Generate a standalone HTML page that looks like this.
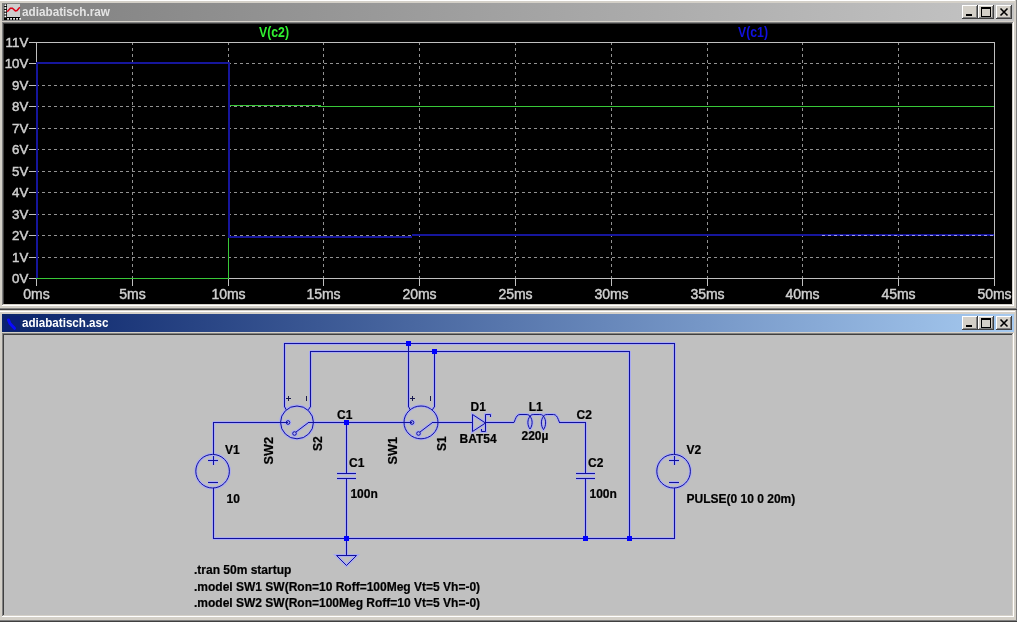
<!DOCTYPE html><html><head><meta charset="utf-8"><title>LTspice</title><style>
html,body{margin:0;padding:0;background:#d4d0c8;}body{width:1017px;height:622px;overflow:hidden;position:relative;}
svg{position:absolute;left:0;top:0;display:block;will-change:transform;transform:translateZ(0)}
text{font-family:"Liberation Sans",sans-serif;}
.ax{font-size:14px;fill:#cfcfcf;stroke:#cfcfcf;stroke-width:0.45px;}
.sch{font-size:12px;font-weight:bold;fill:#000;stroke:#000;stroke-width:0.2px;}
.w{shape-rendering:crispEdges}
.s{}
.g{stroke:#929292;stroke-width:1;stroke-dasharray:3 3;shape-rendering:crispEdges}
.f{stroke:#c0c0c0;stroke-width:1;shape-rendering:crispEdges}
</style></head><body>
<svg width="1017" height="622" viewBox="0 0 1017 622">
<defs>
<linearGradient id="gi" x1="0" x2="1" y1="0" y2="0"><stop offset="0" stop-color="#808080"/><stop offset="1" stop-color="#c4c4c4"/></linearGradient>
<linearGradient id="ga" x1="0" x2="1" y1="0" y2="0"><stop offset="0" stop-color="#0a246a"/><stop offset="1" stop-color="#a6caf0"/></linearGradient>
</defs>
<rect x="0" y="-1" width="1017" height="311" fill="#d4d0c8" />
<rect x="0" y="0" width="1015" height="1" fill="#ffffff" />
<rect x="1016" y="-1" width="1" height="311" fill="#808080" />
<rect x="0" y="309" width="1017" height="1" fill="#404040" />
<rect x="0" y="308" width="1017" height="1" fill="#808080" />
<rect x="2" y="3" width="1012" height="18" fill="url(#gi)" />
<text x="22" y="16" font-size="12" font-weight="bold" fill="#e4e4e4" textLength="88" lengthAdjust="spacingAndGlyphs">adiabatisch.raw</text>
<rect x="962" y="5" width="16" height="14" fill="#d4d0c8" />
<rect x="962" y="5" width="15" height="1" fill="#ffffff" />
<rect x="962" y="5" width="1" height="13" fill="#ffffff" />
<rect x="977" y="5" width="1" height="14" fill="#404040" />
<rect x="962" y="18" width="16" height="1" fill="#404040" />
<rect x="976" y="6" width="1" height="12" fill="#808080" />
<rect x="963" y="17" width="14" height="1" fill="#808080" />
<rect x="966" y="14" width="6" height="2" fill="#000" />
<rect x="978" y="5" width="16" height="14" fill="#d4d0c8" />
<rect x="978" y="5" width="15" height="1" fill="#ffffff" />
<rect x="978" y="5" width="1" height="13" fill="#ffffff" />
<rect x="993" y="5" width="1" height="14" fill="#404040" />
<rect x="978" y="18" width="16" height="1" fill="#404040" />
<rect x="992" y="6" width="1" height="12" fill="#808080" />
<rect x="979" y="17" width="14" height="1" fill="#808080" />
<rect x="981" y="7" width="9" height="9" fill="none" stroke="#000" stroke-width="1" transform="translate(.5,.5)"/>
<rect x="981" y="7" width="10" height="2" fill="#000" />
<rect x="996" y="5" width="16" height="14" fill="#d4d0c8" />
<rect x="996" y="5" width="15" height="1" fill="#ffffff" />
<rect x="996" y="5" width="1" height="13" fill="#ffffff" />
<rect x="1011" y="5" width="1" height="14" fill="#404040" />
<rect x="996" y="18" width="16" height="1" fill="#404040" />
<rect x="1010" y="6" width="1" height="12" fill="#808080" />
<rect x="997" y="17" width="14" height="1" fill="#808080" />
<path d="M1000.5 8.5L1007.5 15.5M1007.5 8.5L1000.5 15.5" stroke="#000" stroke-width="1.6" fill="none"/>
<rect x="2" y="22" width="1012" height="1" fill="#808080" />
<rect x="2" y="22" width="1" height="283" fill="#808080" />
<rect x="3" y="23" width="1009" height="1" fill="#404040" />
<rect x="3" y="23" width="1" height="281" fill="#404040" />
<rect x="2" y="305" width="1012" height="1" fill="#ffffff" />
<rect x="1013" y="22" width="1" height="284" fill="#ffffff" />
<rect x="3" y="304" width="1010" height="1" fill="#d4d0c8" />
<rect x="1012" y="23" width="1" height="282" fill="#d4d0c8" />
<rect x="4" y="24" width="1008" height="280" fill="#000000" />
<rect x="0" y="310" width="1017" height="312" fill="#d4d0c8" />
<rect x="0" y="311" width="1015" height="1" fill="#ffffff" />
<rect x="1016" y="310" width="1" height="312" fill="#808080" />
<rect x="0" y="621" width="1017" height="1" fill="#404040" />
<rect x="0" y="620" width="1017" height="1" fill="#808080" />
<rect x="2" y="314" width="1012" height="18" fill="url(#ga)" />
<text x="22" y="327" font-size="12" font-weight="bold" fill="#ffffff" textLength="86.5" lengthAdjust="spacingAndGlyphs">adiabatisch.asc</text>
<rect x="962" y="316" width="16" height="14" fill="#d4d0c8" />
<rect x="962" y="316" width="15" height="1" fill="#ffffff" />
<rect x="962" y="316" width="1" height="13" fill="#ffffff" />
<rect x="977" y="316" width="1" height="14" fill="#404040" />
<rect x="962" y="329" width="16" height="1" fill="#404040" />
<rect x="976" y="317" width="1" height="12" fill="#808080" />
<rect x="963" y="328" width="14" height="1" fill="#808080" />
<rect x="966" y="325" width="6" height="2" fill="#000" />
<rect x="978" y="316" width="16" height="14" fill="#d4d0c8" />
<rect x="978" y="316" width="15" height="1" fill="#ffffff" />
<rect x="978" y="316" width="1" height="13" fill="#ffffff" />
<rect x="993" y="316" width="1" height="14" fill="#404040" />
<rect x="978" y="329" width="16" height="1" fill="#404040" />
<rect x="992" y="317" width="1" height="12" fill="#808080" />
<rect x="979" y="328" width="14" height="1" fill="#808080" />
<rect x="981" y="318" width="9" height="9" fill="none" stroke="#000" stroke-width="1" transform="translate(.5,.5)"/>
<rect x="981" y="318" width="10" height="2" fill="#000" />
<rect x="996" y="316" width="16" height="14" fill="#d4d0c8" />
<rect x="996" y="316" width="15" height="1" fill="#ffffff" />
<rect x="996" y="316" width="1" height="13" fill="#ffffff" />
<rect x="1011" y="316" width="1" height="14" fill="#404040" />
<rect x="996" y="329" width="16" height="1" fill="#404040" />
<rect x="1010" y="317" width="1" height="12" fill="#808080" />
<rect x="997" y="328" width="14" height="1" fill="#808080" />
<path d="M1000.5 319.5L1007.5 326.5M1007.5 319.5L1000.5 326.5" stroke="#000" stroke-width="1.6" fill="none"/>
<rect x="2" y="333" width="1012" height="1" fill="#808080" />
<rect x="2" y="333" width="1" height="283" fill="#808080" />
<rect x="3" y="334" width="1009" height="1" fill="#404040" />
<rect x="3" y="334" width="1" height="281" fill="#404040" />
<rect x="2" y="616" width="1012" height="1" fill="#ffffff" />
<rect x="1013" y="333" width="1" height="284" fill="#ffffff" />
<rect x="3" y="615" width="1010" height="1" fill="#d4d0c8" />
<rect x="1012" y="334" width="1" height="282" fill="#d4d0c8" />
<rect x="4" y="335" width="1008" height="280" fill="#c0c0c0" />
<rect x="4" y="4" width="16" height="16" fill="#cecece" />
<rect x="4" y="4" width="3" height="16" fill="#000" />
<rect x="4" y="17" width="16" height="3" fill="#000" />
<rect x="4.4" y="4.3" width="1.9" height="1.8" fill="#fff" />
<rect x="4.4" y="7.1" width="1.9" height="1.8" fill="#fff" />
<rect x="4.4" y="9.899999999999999" width="1.9" height="1.8" fill="#fff" />
<rect x="4.4" y="12.7" width="1.9" height="1.8" fill="#fff" />
<rect x="4.4" y="15.5" width="1.9" height="1.8" fill="#fff" />
<rect x="7.2" y="18" width="1.7" height="1.7" fill="#fff" />
<rect x="10.2" y="18" width="1.7" height="1.7" fill="#fff" />
<rect x="13.2" y="18" width="1.7" height="1.7" fill="#fff" />
<rect x="16.2" y="18" width="1.7" height="1.7" fill="#fff" />
<rect x="19.2" y="18" width="1.7" height="1.7" fill="#fff" />
<path d="M7.2 11.8L10.4 8.3L12.4 8.3L15.4 10.9L17 10.6L19.8 7.3" stroke="#dc0018" stroke-width="1.5" fill="none"/>
<rect x="4" y="316" width="16" height="15" fill="#0a1f74" />
<path d="M8.5 320L10 323.5L14.5 328.3" stroke="#0a0aff" stroke-width="3" fill="none" stroke-linecap="round" stroke-linejoin="round"/>
<line x1="132.5" y1="42" x2="132.5" y2="278" class="g" />
<line x1="228.5" y1="42" x2="228.5" y2="278" class="g" />
<line x1="323.5" y1="42" x2="323.5" y2="278" class="g" />
<line x1="419.5" y1="42" x2="419.5" y2="278" class="g" />
<line x1="515.5" y1="42" x2="515.5" y2="278" class="g" />
<line x1="611.5" y1="42" x2="611.5" y2="278" class="g" />
<line x1="707.5" y1="42" x2="707.5" y2="278" class="g" />
<line x1="802.5" y1="42" x2="802.5" y2="278" class="g" />
<line x1="898.5" y1="42" x2="898.5" y2="278" class="g" />
<line x1="36" y1="257.5" x2="994" y2="257.5" class="g" />
<line x1="36" y1="235.5" x2="994" y2="235.5" class="g" />
<line x1="36" y1="214.5" x2="994" y2="214.5" class="g" />
<line x1="36" y1="192.5" x2="994" y2="192.5" class="g" />
<line x1="36" y1="171.5" x2="994" y2="171.5" class="g" />
<line x1="36" y1="149.5" x2="994" y2="149.5" class="g" />
<line x1="36" y1="128.5" x2="994" y2="128.5" class="g" />
<line x1="36" y1="106.5" x2="994" y2="106.5" class="g" />
<line x1="36" y1="85.5" x2="994" y2="85.5" class="g" />
<line x1="36" y1="63.5" x2="994" y2="63.5" class="g" />
<line x1="29" y1="42.5" x2="995" y2="42.5" class="f" />
<line x1="29" y1="278.5" x2="995" y2="278.5" class="f" />
<line x1="36.5" y1="42" x2="36.5" y2="286" class="f" />
<line x1="994.5" y1="42" x2="994.5" y2="286" class="f" />
<line x1="132.5" y1="278" x2="132.5" y2="286" class="f" />
<line x1="228.5" y1="278" x2="228.5" y2="286" class="f" />
<line x1="323.5" y1="278" x2="323.5" y2="286" class="f" />
<line x1="419.5" y1="278" x2="419.5" y2="286" class="f" />
<line x1="515.5" y1="278" x2="515.5" y2="286" class="f" />
<line x1="611.5" y1="278" x2="611.5" y2="286" class="f" />
<line x1="707.5" y1="278" x2="707.5" y2="286" class="f" />
<line x1="802.5" y1="278" x2="802.5" y2="286" class="f" />
<line x1="898.5" y1="278" x2="898.5" y2="286" class="f" />
<line x1="29" y1="257.5" x2="36" y2="257.5" class="f" />
<line x1="29" y1="235.5" x2="36" y2="235.5" class="f" />
<line x1="29" y1="214.5" x2="36" y2="214.5" class="f" />
<line x1="29" y1="192.5" x2="36" y2="192.5" class="f" />
<line x1="29" y1="171.5" x2="36" y2="171.5" class="f" />
<line x1="29" y1="149.5" x2="36" y2="149.5" class="f" />
<line x1="29" y1="128.5" x2="36" y2="128.5" class="f" />
<line x1="29" y1="106.5" x2="36" y2="106.5" class="f" />
<line x1="29" y1="85.5" x2="36" y2="85.5" class="f" />
<line x1="29" y1="63.5" x2="36" y2="63.5" class="f" />
<text class="ax" x="28.3" y="282.8" text-anchor="end" style="font-size:13.3px">0V</text>
<text class="ax" x="28.3" y="261.8" text-anchor="end" style="font-size:13.3px">1V</text>
<text class="ax" x="28.3" y="239.8" text-anchor="end" style="font-size:13.3px">2V</text>
<text class="ax" x="28.3" y="218.8" text-anchor="end" style="font-size:13.3px">3V</text>
<text class="ax" x="28.3" y="196.8" text-anchor="end" style="font-size:13.3px">4V</text>
<text class="ax" x="28.3" y="175.8" text-anchor="end" style="font-size:13.3px">5V</text>
<text class="ax" x="28.3" y="153.8" text-anchor="end" style="font-size:13.3px">6V</text>
<text class="ax" x="28.3" y="132.8" text-anchor="end" style="font-size:13.3px">7V</text>
<text class="ax" x="28.3" y="110.8" text-anchor="end" style="font-size:13.3px">8V</text>
<text class="ax" x="28.3" y="89.8" text-anchor="end" style="font-size:13.3px">9V</text>
<text class="ax" x="28.3" y="67.8" text-anchor="end" style="font-size:13.3px">10V</text>
<text class="ax" x="28.3" y="46.8" text-anchor="end" style="font-size:13.3px">11V</text>
<text class="ax" x="36.5" y="299" text-anchor="middle">0ms</text>
<text class="ax" x="132.5" y="299" text-anchor="middle">5ms</text>
<text class="ax" x="228.5" y="299" text-anchor="middle">10ms</text>
<text class="ax" x="323.5" y="299" text-anchor="middle">15ms</text>
<text class="ax" x="419.5" y="299" text-anchor="middle">20ms</text>
<text class="ax" x="515.5" y="299" text-anchor="middle">25ms</text>
<text class="ax" x="611.5" y="299" text-anchor="middle">30ms</text>
<text class="ax" x="707.5" y="299" text-anchor="middle">35ms</text>
<text class="ax" x="802.5" y="299" text-anchor="middle">40ms</text>
<text class="ax" x="898.5" y="299" text-anchor="middle">45ms</text>
<text class="ax" x="994.5" y="299" text-anchor="middle">50ms</text>
<text x="274" y="37" font-size="14" font-weight="bold" fill="#30f030" text-anchor="middle" textLength="30" lengthAdjust="spacingAndGlyphs">V(c2)</text>
<text x="753" y="37" font-size="14" font-weight="bold" fill="#1010e0" text-anchor="middle" textLength="30" lengthAdjust="spacingAndGlyphs">V(c1)</text>
<path d="M36 278.5H228.5V105.5H320V106.5H994" stroke="#38c838" stroke-width="1" fill="none" shape-rendering="crispEdges"/>
<rect x="36" y="62" width="2" height="216" fill="#16169c" />
<rect x="36" y="62" width="194" height="2" fill="#16169c" />
<rect x="228" y="62" width="2" height="176" fill="#16169c" />
<rect x="228" y="236" width="184" height="2" fill="#16169c" />
<rect x="412" y="234" width="582" height="2" fill="#16169c" />
<line x1="822" y1="235.5" x2="994" y2="235.5" stroke="#9a9af0" stroke-width="1" stroke-dasharray="3 3" shape-rendering="crispEdges"/>
<defs><g id="sch" fill="none">
<line x1="284" y1="343.5" x2="675" y2="343.5" class="w" />
<line x1="284.5" y1="343" x2="284.5" y2="407" class="w" />
<line x1="674.5" y1="343" x2="674.5" y2="454" class="w" />
<line x1="310" y1="351.5" x2="630" y2="351.5" class="w" />
<line x1="310.5" y1="351" x2="310.5" y2="407" class="w" />
<line x1="629.5" y1="351" x2="629.5" y2="539" class="w" />
<line x1="408.5" y1="343" x2="408.5" y2="407" class="w" />
<line x1="434.5" y1="351" x2="434.5" y2="407" class="w" />
<line x1="213" y1="422.5" x2="288" y2="422.5" class="w" />
<line x1="213.5" y1="422" x2="213.5" y2="454" class="w" />
<line x1="213.5" y1="488" x2="213.5" y2="539" class="w" />
<line x1="213" y1="538.5" x2="675" y2="538.5" class="w" />
<line x1="674.5" y1="488" x2="674.5" y2="539" class="w" />
<line x1="308" y1="422.5" x2="412" y2="422.5" class="w" />
<line x1="432" y1="422.5" x2="473" y2="422.5" class="w" />
<line x1="485" y1="422.5" x2="514" y2="422.5" class="w" />
<line x1="559" y1="422.5" x2="586" y2="422.5" class="w" />
<line x1="346.5" y1="422" x2="346.5" y2="473" class="w" />
<line x1="346.5" y1="478" x2="346.5" y2="556" class="w" />
<line x1="585.5" y1="422" x2="585.5" y2="473" class="w" />
<line x1="585.5" y1="478" x2="585.5" y2="539" class="w" />
<ellipse cx="297" cy="422.4" rx="16.45" ry="16.4" class="s"/>
<path d="M284.5 406.5L286.2 409.8M310.5 406.5L308.4 409.8" class="s"/>
<circle cx="288" cy="422.5" r="1.8" class="s"/>
<circle cx="294.5" cy="433.5" r="1.8" class="s"/>
<path d="M296 432L308.5 422.5" class="s"/>
<ellipse cx="421" cy="422.4" rx="17" ry="16.4" class="s"/>
<path d="M408.5 406.5L410.2 409.8M434.5 406.5L432.4 409.8" class="s"/>
<circle cx="412" cy="422.5" r="1.8" class="s"/>
<circle cx="418.5" cy="433.5" r="1.8" class="s"/>
<path d="M420 432L432.5 422.5" class="s"/>
<circle cx="212.6" cy="471.2" r="16.8" class="s"/>
<path d="M208 460.5h10M213.5 456v9M208 482.5h10" class="s" shape-rendering="crispEdges"/>
<circle cx="673.6" cy="471.2" r="16.8" class="s"/>
<path d="M669 460.5h10M674.5 456v9M669 482.5h10" class="s" shape-rendering="crispEdges"/>
<line x1="337" y1="473.5" x2="356" y2="473.5" class="w" />
<line x1="337" y1="478.5" x2="356" y2="478.5" class="w" />
<line x1="576" y1="473.5" x2="595" y2="473.5" class="w" />
<line x1="576" y1="478.5" x2="595" y2="478.5" class="w" />
<path d="M336.5 555.5H356.5L346.5 565.5Z" class="s"/>
<path d="M472.5 414.5V431.5L485.5 423Z" class="s"/>
<path d="M490.5 417V414.5H485.5V431.5H481.5V429" class="s"/>
<path d="M514 422.5L515.2 419.5C516.2 416.8 517.5 414.5 520 414.5H526C528.8 414.5 530 415.5 530 417C530 415.5 531.2 414.5 533.8 414.5H539.8C542.4 414.5 543.5 415.5 543.5 417C543.5 415.5 544.7 414.5 547.2 414.5H553.5C556 414.5 557.3 416.8 558.3 419.5L559.5 422.5" class="s"/>
<path d="M530 416.3C533 420 532.6 425.5 530 429C527.4 425.5 527 420 530 416.3Z" class="s"/>
<path d="M543.5 416.3C546.5 420 546.1 426 543.5 429.6C540.9 426 540.5 420 543.5 416.3Z" class="s"/>
</g></defs>
<use href="#sch" stroke="#a4a6ff" stroke-width="3" opacity="0.8"/>
<use href="#sch" stroke="#10109c" stroke-width="1"/>
<path d="M286 398.5h5M288.5 396v5M306.5 396v5" stroke="#18184c" stroke-width="1" fill="none" shape-rendering="crispEdges"/>
<path d="M410 398.5h5M412.5 396v5M430.5 396v5" stroke="#18184c" stroke-width="1" fill="none" shape-rendering="crispEdges"/>
<rect x="406" y="341" width="5" height="5" fill="#0000ff" />
<rect x="432" y="349" width="5" height="5" fill="#0000ff" />
<rect x="344" y="420" width="5" height="5" fill="#0000ff" />
<rect x="344" y="536" width="5" height="5" fill="#0000ff" />
<rect x="583" y="536" width="5" height="5" fill="#0000ff" />
<rect x="627" y="536" width="5" height="5" fill="#0000ff" />
<text class="sch" x="225" y="454" >V1</text>
<text class="sch" x="226.5" y="503" >10</text>
<text class="sch" x="337" y="418.7" >C1</text>
<text class="sch" x="349" y="466.8" >C1</text>
<text class="sch" x="350.4" y="497.7" >100n</text>
<text class="sch" x="470.5" y="410.8" >D1</text>
<text class="sch" x="459.5" y="442.6" >BAT54</text>
<text class="sch" x="528.7" y="410.7" >L1</text>
<text class="sch" x="521.5" y="440" >220µ</text>
<text class="sch" x="576.5" y="419" >C2</text>
<text class="sch" x="588" y="466.8" >C2</text>
<text class="sch" x="589.5" y="498" >100n</text>
<text class="sch" x="686.5" y="453.8" >V2</text>
<text class="sch" x="686.5" y="503" >PULSE(0 10 0 20m)</text>
<text class="sch" transform="translate(272.5,464.5) rotate(-90)" textLength="27.5" lengthAdjust="spacingAndGlyphs">SW2</text>
<text class="sch" transform="translate(321.8,451) rotate(-90)">S2</text>
<text class="sch" transform="translate(396.5,464.5) rotate(-90)" textLength="27.5" lengthAdjust="spacingAndGlyphs">SW1</text>
<text class="sch" transform="translate(445.5,451) rotate(-90)">S1</text>
<text class="sch" x="194" y="574" >.tran 50m startup</text>
<text class="sch" x="194" y="590.8" >.model SW1 SW(Ron=10 Roff=100Meg Vt=5 Vh=-0)</text>
<text class="sch" x="194" y="607.2" >.model SW2 SW(Ron=100Meg Roff=10 Vt=5 Vh=-0)</text>
</svg></body></html>
